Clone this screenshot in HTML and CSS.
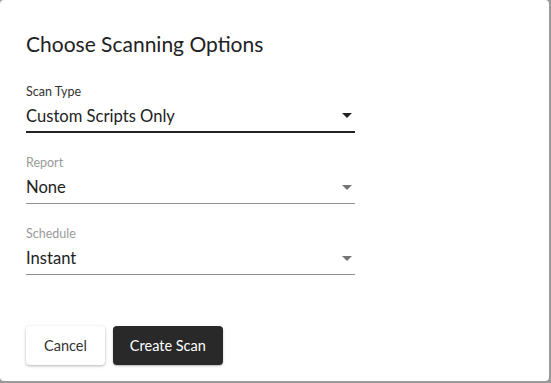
FILE: index.html
```html
<!DOCTYPE html>
<html>
<head>
<meta charset="utf-8">
<link rel="stylesheet" href="styles.css">
</head>
<body>
<div class="dialog">
  <h2 class="title">Choose Scanning Options</h2>
  <div class="field focused">
    <div class="label">Scan Type</div>
    <div class="select"><span class="value">Custom Scripts Only</span><span class="arrow"></span></div>
  </div>
  <div class="field">
    <div class="label">Report</div>
    <div class="select"><span class="value">None</span><span class="arrow"></span></div>
  </div>
  <div class="field">
    <div class="label">Schedule</div>
    <div class="select"><span class="value">Instant</span><span class="arrow"></span></div>
  </div>
  <div class="actions">
    <button class="btn cancel">Cancel</button>
    <button class="btn primary">Create Scan</button>
  </div>
</div>
</body>
</html>
```

FILE: styles.css
```css
html, body {
  margin: 0;
  padding: 0;
}
body {
  width: 551px;
  height: 383px;
  background: #9a9a9a;
  font-family: Lato, "Open Sans", sans-serif;
  overflow: hidden;
}
.dialog {
  width: 549px;
  height: 381px;
  background: #fff;
  border-radius: 4px;
  box-sizing: border-box;
  padding: 30px 26px 0 26px;
  display: flex;
  flex-direction: column;
}
.title {
  margin: 0;
  font-size: 21px;
  line-height: 28px;
  font-weight: 400;
  color: #222;
}
.field {
  width: 329px;
}
.title + .field { margin-top: 26px; }
.field + .field { margin-top: 22px; }
.label {
  font-size: 12.5px;
  line-height: 16px;
  color: #9a9a9a;
}
.focused .label { color: #333; }
.select {
  display: flex;
  align-items: center;
  justify-content: space-between;
  height: 32px;
  border-bottom: 1px solid #8f8f8f;
}
.focused .select {
  height: 31px;
  border-bottom: 2px solid #222;
}
.value {
  font-size: 16.6px;
  color: #222;
}
.arrow {
  width: 0;
  height: 0;
  margin-right: 3px;
  border-left: 5px solid transparent;
  border-right: 5px solid transparent;
  border-top: 5px solid #757575;
}
.focused .arrow { border-top-color: #222; }
.actions {
  display: flex;
  gap: 8px;
  margin-top: 51px;
}
.btn {
  height: 39px;
  border: none;
  border-radius: 4px;
  font-family: inherit;
  font-size: 14.5px;
  padding: 0 18px;
}
.cancel {
  background: #fff;
  color: #333;
  box-shadow: 0 1px 3px rgba(0,0,0,0.3);
}
.primary {
  padding: 0 17px;
  background: #292929;
  color: #fff;
  box-shadow: 0 1px 2px rgba(0,0,0,0.3);
}
```
